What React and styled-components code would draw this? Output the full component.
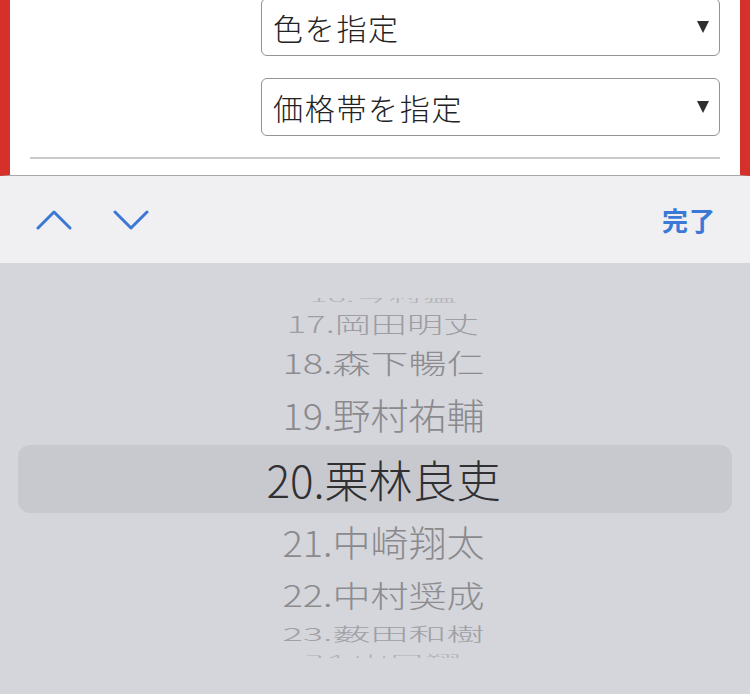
import React from "react";
import styled, { createGlobalStyle } from "styled-components";

const Global = createGlobalStyle`
  html, body { margin: 0; padding: 0; background: #d5d6db; }
  body { font-family: "Noto Sans CJK JP", "Noto Sans", sans-serif; }
  * { box-sizing: border-box; }
`;

const Screen = styled.div`
  width: 750px;
  height: 694px;
  overflow: hidden;
  display: flex;
  flex-direction: column;
`;

const FormArea = styled.div`
  height: 176px;
  flex: none;
  background: #fff;
  border-left: 10px solid #d6302b;
  border-right: 10px solid #d6302b;
  border-bottom: 1px solid #a8a8ac;
  padding: 0 20px 0 20px;
  display: flex;
  flex-direction: column;
`;

const Select = styled.div`
  margin-left: 231px;
  margin-top: ${(p) => p.$mt}px;
  height: 58px;
  border: 1.5px solid #939393;
  border-radius: 6px;
  background: #fff;
  display: flex;
  align-items: center;
  justify-content: space-between;
  padding: 0 10px 0 11px;
  font-size: 30px;
  font-weight: 300;
  color: #222;
  letter-spacing: 1.7px;
`;

const Arrow = styled.svg`
  width: 12px;
  height: 12px;
  flex: none;
`;

const Divider = styled.div`
  margin-top: 21px;
  height: 2px;
  background: #cacaca;
`;

const Toolbar = styled.div`
  height: 87px;
  flex: none;
  background: #f0f0f2;
  display: flex;
  align-items: center;
  padding: 0 34px 0 36px;
`;

const NavButton = styled.svg`
  width: 36px;
  height: 20px;
  margin-right: ${(p) => p.$mr}px;
  flex: none;
`;

const Done = styled.div`
  margin-left: auto;
  font-size: 26px;
  font-weight: 700;
  color: #3a79d5;
  letter-spacing: 1px;
`;

const Picker = styled.div`
  flex: 1;
  background: #d5d6db;
  padding-top: 35px;
`;

const Wheel = styled.div`
  height: 360px;
  overflow: hidden;
`;

const List = styled.div`
  margin-top: -11px;
  display: flex;
  flex-direction: column;
`;

const Row = styled.div`
  height: ${(p) => p.$h}px;
  flex: none;
  display: flex;
  align-items: center;
  justify-content: center;
  padding-left: 17px;
  margin: 0 ${(p) => (p.$sel ? 18 : 0)}px;
  border-radius: 12px;
  background: ${(p) => (p.$sel ? "#c8c9ce" : "transparent")};
`;

const Label = styled.span`
  display: inline-block;
  white-space: nowrap;
  font-size: ${(p) => p.$fs}px;
  font-weight: 300;
  color: ${(p) => p.$c};
  line-height: 1;
  transform: scale(${(p) => p.$sx}, ${(p) => p.$sy});
`;

const items = [
  { t: "16.今村猛", h: 20.5, sy: 0.3, sx: 0.9, c: "#b0b0b5" },
  { t: "17.岡田明丈", h: 31.5, sy: 0.6, sx: 0.95, c: "#9d9da2" },
  { t: "18.森下暢仁", h: 46, sy: 0.72, sx: 1, c: "#8c8c90" },
  { t: "19.野村祐輔", h: 60, sy: 0.95, sx: 1, c: "#8a8a8e" },
  { t: "20.栗林良吏", h: 68, sy: 1, sx: 1, c: "#303033", sel: true, fs: 44 },
  { t: "21.中崎翔太", h: 58.5, sy: 0.95, sx: 1, c: "#8a8a8e" },
  { t: "22.中村奨成", h: 46.5, sy: 0.78, sx: 1, c: "#8c8c90" },
  { t: "23.薮田和樹", h: 29.5, sy: 0.47, sx: 1, c: "#a0a0a4" },
  { t: "24.山口翔", h: 21.5, sy: 0.25, sx: 0.95, c: "#b0b0b5" },
];

export default function App() {
  return (
    <Screen>
      <Global />
      <FormArea>
        <Select $mt={-2}>
          <span>色を指定</span>
          <Arrow viewBox="0 0 12 12">
            <polygon points="0,0 12,0 6,12" fill="#2e2e2e" />
          </Arrow>
        </Select>
        <Select $mt={22}>
          <span>価格帯を指定</span>
          <Arrow viewBox="0 0 12 12">
            <polygon points="0,0 12,0 6,12" fill="#2e2e2e" />
          </Arrow>
        </Select>
        <Divider />
      </FormArea>
      <Toolbar>
        <NavButton viewBox="0 0 36 20" $mr={41}>
          <polyline points="2,18 18,2 34,18" fill="none" stroke="#3b77d4" strokeWidth="3" strokeLinecap="round" strokeLinejoin="round" />
        </NavButton>
        <NavButton viewBox="0 0 36 20" $mr={0}>
          <polyline points="2,2 18,18 34,2" fill="none" stroke="#3b77d4" strokeWidth="3" strokeLinecap="round" strokeLinejoin="round" />
        </NavButton>
        <Done>完了</Done>
      </Toolbar>
      <Picker>
        <Wheel>
          <List>
            {items.map((it) => (
              <Row key={it.t} $h={it.h} $sel={it.sel}>
                <Label $fs={it.fs || 38} $c={it.c} $sx={it.sx} $sy={it.sy}>
                  {it.t}
                </Label>
              </Row>
            ))}
          </List>
        </Wheel>
      </Picker>
    </Screen>
  );
}
